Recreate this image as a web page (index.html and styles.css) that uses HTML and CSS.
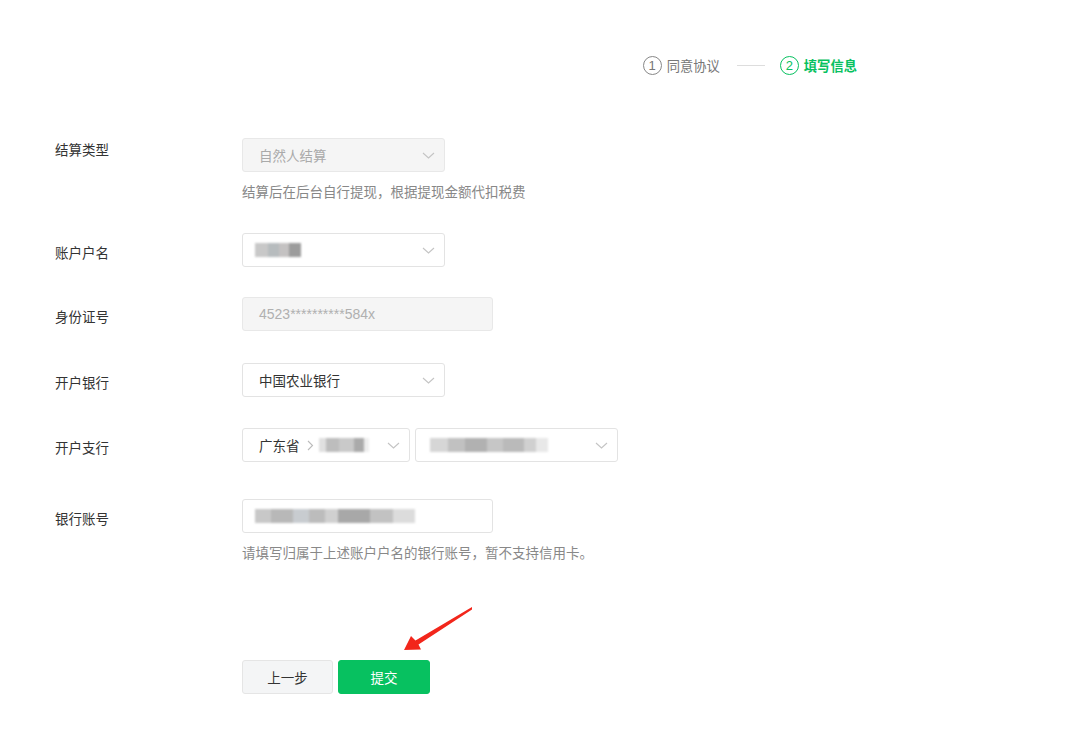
FILE: index.html
```html
<!DOCTYPE html>
<html lang="zh-CN">
<head>
    <meta charset="UTF-8">
    <meta name="viewport" content="width=device-width, initial-scale=1.0">
    <title>填写信息</title>
    <link rel="stylesheet" href="styles.css">
</head>
<body>

<div class="page">
    <div class="steps">
        <div class="step">
            <span class="step-num">1</span>
            <span class="step-text">同意协议</span>
        </div>
        <div class="step-line"></div>
        <div class="step active">
            <span class="step-num">2</span>
            <span class="step-text">填写信息</span>
        </div>
    </div>

    <div class="form">
        <div class="row row-type">
            <div class="label label-top">结算类型</div>
            <div class="field">
                <div class="select disabled">
                    <span>自然人结算</span>
                    <svg class="arrow-down" width="13" height="7" viewBox="0 0 13 7"><path d="M1 1l5.5 5 5.5-5" fill="none" stroke="#c4c4c4" stroke-width="1.1"/></svg>
                </div>
                <div class="help">结算后在后台自行提现，根据提现金额代扣税费</div>
            </div>
        </div>

        <div class="row row-name">
            <div class="label">账户户名</div>
            <div class="field">
                <div class="select">
                    <span class="blur blur-name"></span>
                    <svg class="arrow-down" width="13" height="7" viewBox="0 0 13 7"><path d="M1 1l5.5 5 5.5-5" fill="none" stroke="#c4c4c4" stroke-width="1.1"/></svg>
                </div>
            </div>
        </div>

        <div class="row row-id">
            <div class="label">身份证号</div>
            <div class="field">
                <div class="input disabled">4523**********584x</div>
            </div>
        </div>

        <div class="row row-bank">
            <div class="label">开户银行</div>
            <div class="field">
                <div class="select">
                    <span>中国农业银行</span>
                    <svg class="arrow-down" width="13" height="7" viewBox="0 0 13 7"><path d="M1 1l5.5 5 5.5-5" fill="none" stroke="#c4c4c4" stroke-width="1.1"/></svg>
                </div>
            </div>
        </div>

        <div class="row row-branch">
            <div class="label">开户支行</div>
            <div class="field field-inline">
                <div class="select select-area">
                    <span class="area">广东省
                        <svg class="sep" width="7" height="11" viewBox="0 0 7 11"><path d="M1 1l4.5 4.5L1 10" fill="none" stroke="#bbb" stroke-width="1.1"/></svg>
                        <span class="blur blur-city"></span></span>
                    <svg class="arrow-down" width="13" height="7" viewBox="0 0 13 7"><path d="M1 1l5.5 5 5.5-5" fill="none" stroke="#c4c4c4" stroke-width="1.1"/></svg>
                </div>
                <div class="select">
                    <span class="blur blur-branch"></span>
                    <svg class="arrow-down" width="13" height="7" viewBox="0 0 13 7"><path d="M1 1l5.5 5 5.5-5" fill="none" stroke="#c4c4c4" stroke-width="1.1"/></svg>
                </div>
            </div>
        </div>

        <div class="row row-account">
            <div class="label">银行账号</div>
            <div class="field">
                <div class="input">
                    <span class="blur blur-account"></span>
                </div>
                <div class="help">请填写归属于上述账户户名的银行账号，暂不支持信用卡。</div>
            </div>
        </div>

        <div class="actions">
            <button class="btn">上一步</button>
            <button class="btn btn-primary">提交</button>
            <svg class="pointer" width="80" height="60" viewBox="0 0 80 60">
                <polygon points="75,7 18.5,40.5 14,36 7,50 24,49.5 21.5,44.5 75,9.5" fill="#f2261b"/>
            </svg>
        </div>
    </div>
</div>

</body>
</html>
```

FILE: styles.css
```css
body {
    margin: 0;
    background: #fff;
    font-family: "Noto Sans CJK SC", "Noto Sans", sans-serif;
    color: #333;
}

.page {
    width: 1080px;
    height: 730px;
    position: relative;
}

/* steps */
.steps {
    display: flex;
    align-items: center;
    justify-content: flex-end;
    padding: 55px 223px 0 0;
    height: 20px;
}

.step {
    display: flex;
    align-items: center;
    color: #777;
    font-size: 13.3px;
}

.step-num {
    width: 17px;
    height: 17px;
    border: 1.3px solid #888;
    border-radius: 50%;
    display: flex;
    align-items: center;
    justify-content: center;
    font-size: 13px;
    line-height: 1;
    margin-right: 5px;
    font-family: "Liberation Sans", sans-serif;
}

.step.active {
    color: #07c160;
    font-weight: bold;
}

.step.active .step-num {
    border-color: #07c160;
    font-weight: normal;
}

.step-line {
    width: 28px;
    height: 1px;
    background: #ddd;
    margin: 0 15px 0 17px;
}

/* form */
.form {
    padding: 63px 0 0 55px;
}

.row {
    display: flex;
    align-items: flex-start;
}

.label {
    width: 187px;
    height: 34px;
    line-height: 38px;
    font-size: 13.5px;
    color: #333;
}

.label.label-top {
    line-height: 22px;
}

.row-name { margin-top: 32px; }
.row-id { margin-top: 30px; }
.row-bank { margin-top: 32px; }
.row-branch { margin-top: 31px; }
.row-account { margin-top: 37px; }

.field-inline {
    display: flex;
    gap: 5px;
}

.select,
.input {
    box-sizing: border-box;
    height: 34px;
    border: 1px solid #e3e3e3;
    border-radius: 3px;
    padding: 0 9px 0 16px;
    display: flex;
    align-items: center;
    justify-content: space-between;
    font-size: 13.5px;
    color: #333;
    background: #fff;
}

.select {
    width: 203px;
}

.select-area {
    width: 168px;
}

.input {
    width: 251px;
    justify-content: flex-start;
}

.disabled {
    background: #f5f5f5;
    color: #aaa;
    border-color: #e8e8e8;
}

.input.disabled {
    font-family: "Liberation Sans", sans-serif;
    font-size: 14px;
    color: #b0b0b0;
}

.arrow-down {
    flex: none;
}

.area {
    display: flex;
    align-items: center;
}

.sep {
    margin: 0 5px 0 7px;
}

.help {
    font-size: 13.5px;
    color: #888;
    line-height: 20px;
    margin-top: 9px;
}

/* redacted text */
.blur {
    display: inline-block;
    height: 14px;
    filter: blur(1.2px);
}

.blur-name {
    width: 46px;
    margin-left: -4px;
    background: linear-gradient(90deg, #c8c8c8 0 28%, #b7bcbe 28% 52%, #c4c2c2 52% 74%, #9c9c9c 74%);
}

.blur-city {
    width: 50px;
    background: linear-gradient(90deg, #e0e0e0 0 14%, #bdbdbd 14% 40%, #c9c9c9 40% 70%, #aaaaaa 70% 90%, #eeeeee 90%);
}

.blur-branch {
    width: 118px;
    margin-left: -2px;
    background: linear-gradient(90deg, #d6d6d6 0 15%, #c1c1c1 15% 30%, #b1b1b1 30% 48%, #c6c6c6 48% 62%, #bababa 62% 80%, #d0d0d0 80% 90%, #e8e8e8 90%);
}

.blur-account {
    width: 160px;
    margin-left: -4px;
    background: linear-gradient(90deg, #c8c8c8 0 10%, #b8b8b8 10% 24%, #c8ccd0 24% 34%, #bcbcbc 34% 44%, #d0d0d0 44% 52%, #a8a8a8 52% 72%, #c2c2c2 72% 86%, #dcdcdc 86%);
}

/* buttons */
.actions {
    position: relative;
    display: flex;
    gap: 5px;
    margin: 98px 0 0 187px;
}

.btn {
    box-sizing: border-box;
    width: 91px;
    height: 34px;
    border: 1px solid #e5e5e5;
    border-radius: 3px;
    background: #f4f5f6;
    color: #333;
    font-family: "Noto Sans CJK SC", sans-serif;
    font-size: 13.5px;
    cursor: pointer;
}

.btn-primary {
    width: 92px;
    background: #07c160;
    border-color: #07c160;
    color: #fff;
}

.pointer {
    position: absolute;
    left: 155px;
    top: -60px;
}
```
